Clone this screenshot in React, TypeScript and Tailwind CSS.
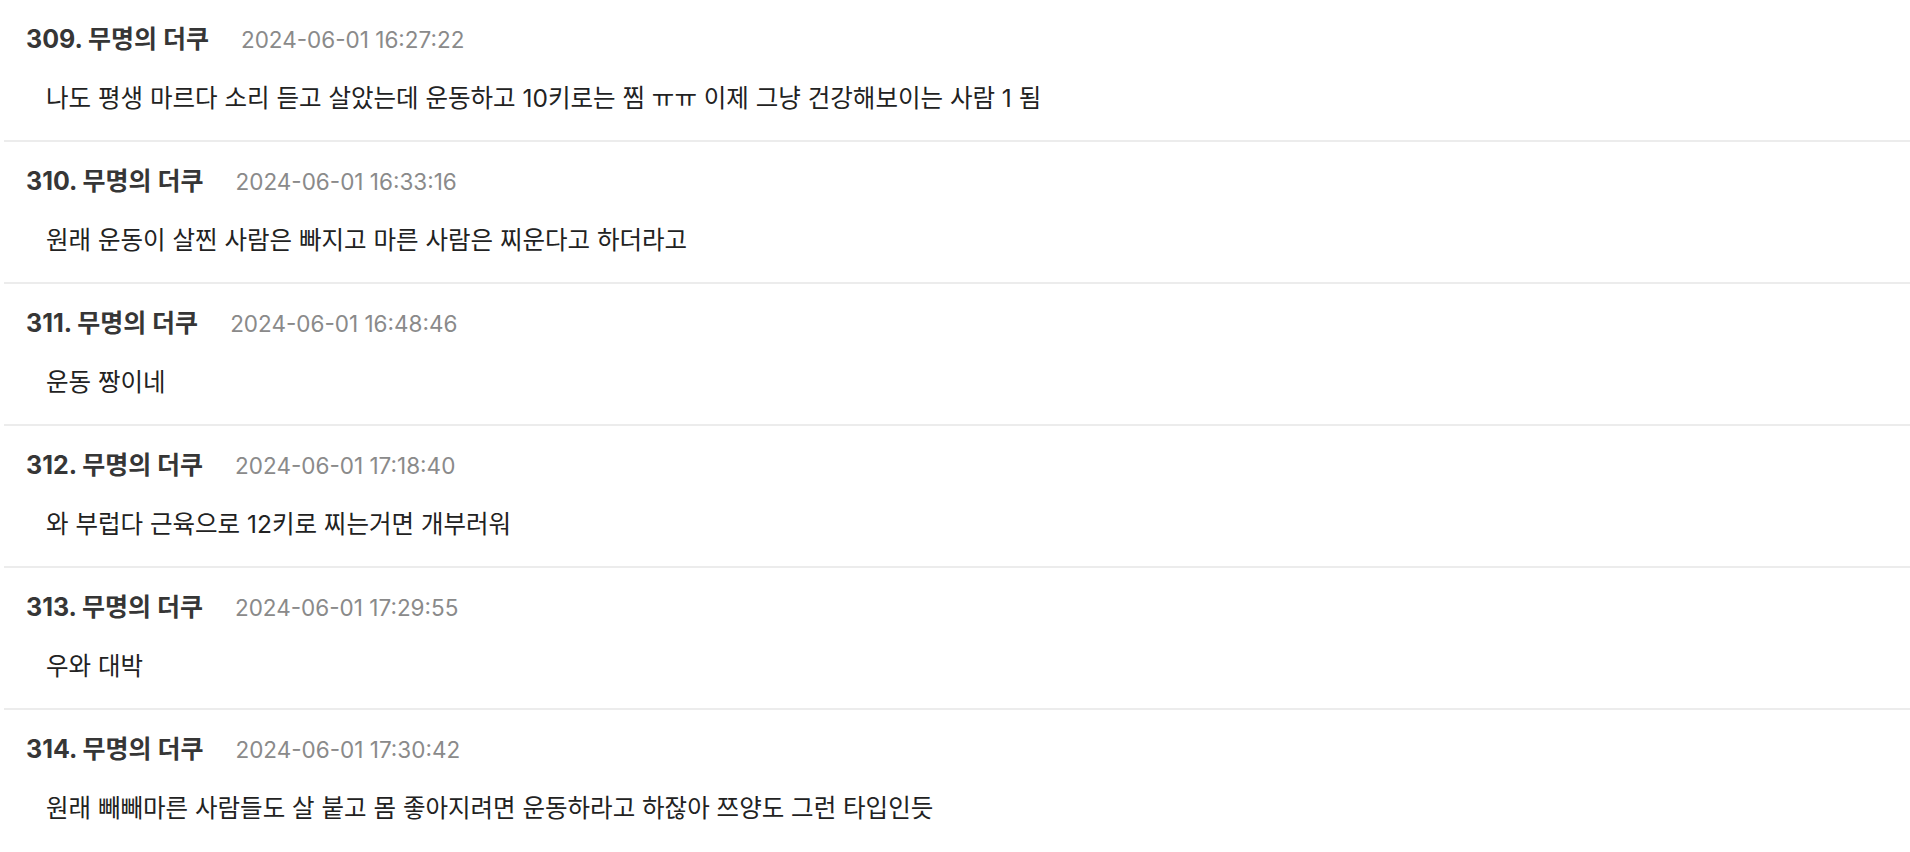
import React from "react";

const comments = [
  { no: 309, time: "2024-06-01 16:27:22", text: "나도 평생 마르다 소리 듣고 살았는데 운동하고 10키로는 찜 ㅠㅠ 이제 그냥 건강해보이는 사람 1 됨" },
  { no: 310, time: "2024-06-01 16:33:16", text: "원래 운동이 살찐 사람은 빠지고 마른 사람은 찌운다고 하더라고" },
  { no: 311, time: "2024-06-01 16:48:46", text: "운동 짱이네" },
  { no: 312, time: "2024-06-01 17:18:40", text: "와 부럽다 근육으로 12키로 찌는거면 개부러워" },
  { no: 313, time: "2024-06-01 17:29:55", text: "우와 대박" },
  { no: 314, time: "2024-06-01 17:30:42", text: "원래 빼빼마른 사람들도 살 붙고 몸 좋아지려면 운동하라고 하잖아 쯔양도 그런 타입인듯" },
];

export default function App() {
  return (
    <div
      className="min-h-screen bg-white"
      style={{ fontFamily: 'Inter, "Noto Sans CJK KR", sans-serif' }}
    >
      <div className="ml-1">
        {comments.map((c) => (
          <div
            key={c.no}
            className="border-b-2 border-[#ececec] last:border-b-0 pt-[26px] pb-[26px]"
          >
            <div className="flex items-center pl-[22px] h-[28px]">
              <span className="text-[25px] font-bold text-[#363636]">
                {c.no}. 무명의 더쿠
              </span>
              <span className="ml-[32px] text-[22.5px] text-[#8a8a8a]">{c.time}</span>
            </div>
            <div className="mt-[28px] pl-[42px] h-[32px] flex items-center text-[24.5px] text-[#222222]">
              {c.text}
            </div>
          </div>
        ))}
      </div>
    </div>
  );
}
